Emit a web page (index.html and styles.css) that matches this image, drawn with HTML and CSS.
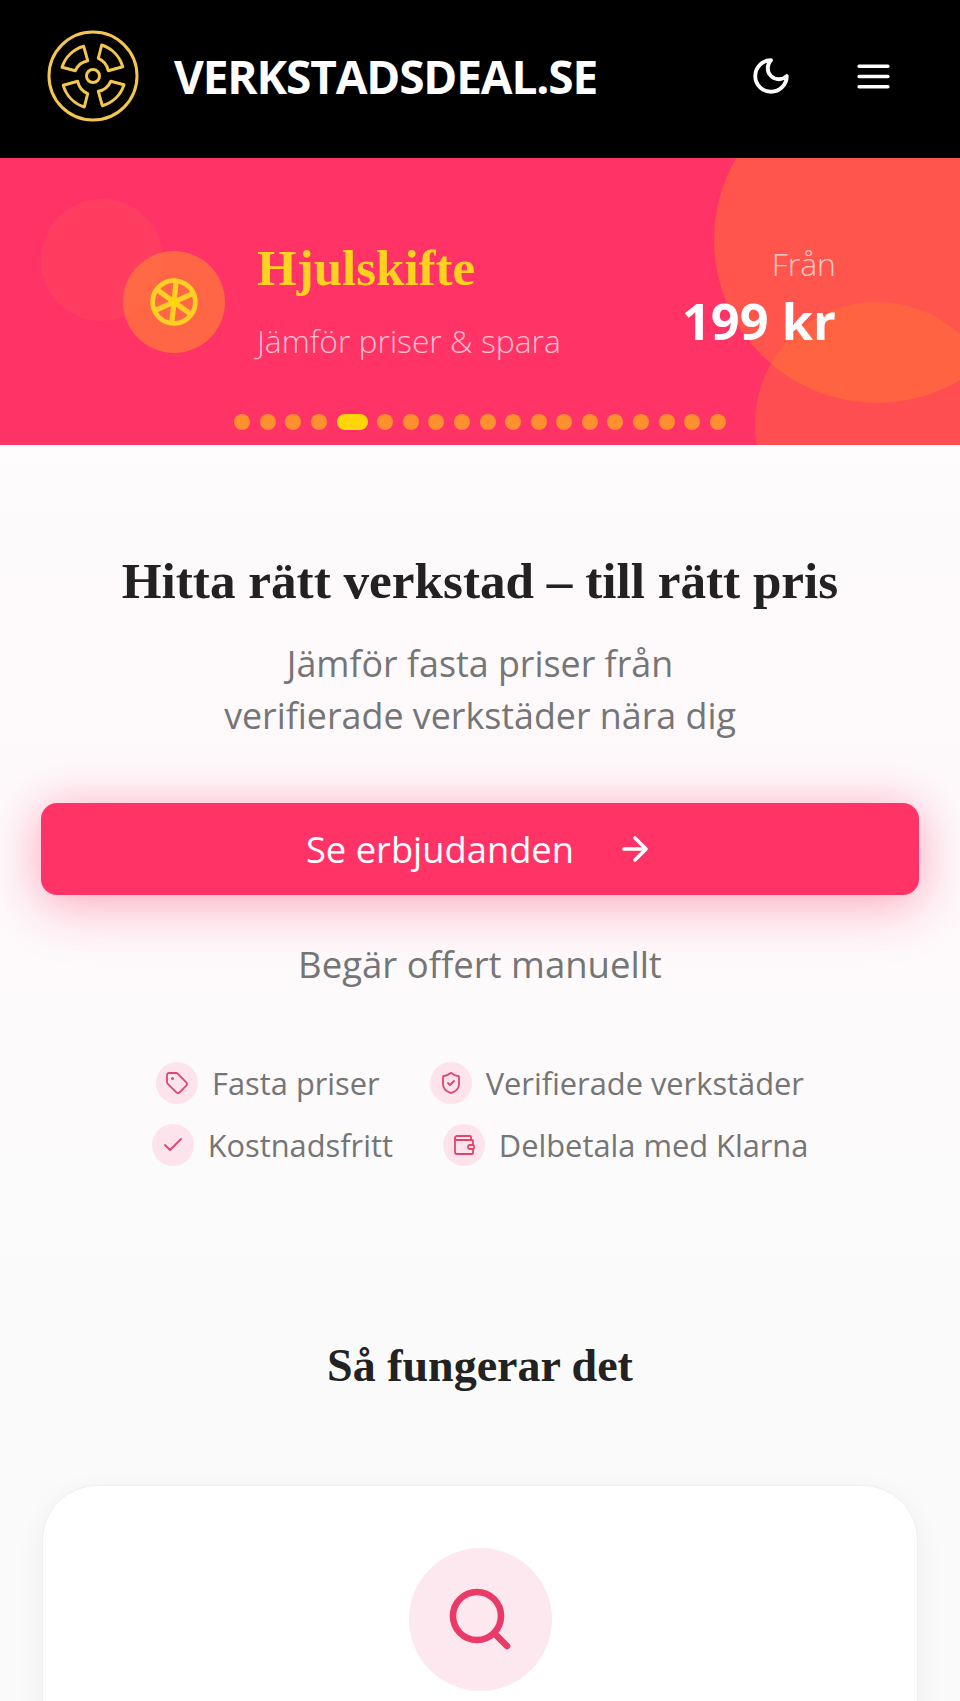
FILE: index.html
```html
<!DOCTYPE html>
<html lang="sv">
<head>
  <meta charset="UTF-8">
  <meta name="viewport" content="width=device-width, initial-scale=1.0">
  <title>Verkstadsdeal.se</title>
  <link rel="stylesheet" href="styles.css">
</head>
<body>
  <header class="topbar">
    <a class="brand" href="#">
      <svg class="brand-logo" viewBox="-46 -46 92 92" fill="none" stroke="#f3c74f" stroke-width="3" stroke-linejoin="round">
        <circle r="44"/>
        <circle r="6.5"/>
        <path id="seg" d="M-31 -8.7A32 32 0 0 1 -9.3 -29.7L-5.3 -15.3A17 17 0 0 0 -17.7 -5.3Z"/>
        <use href="#seg" transform="rotate(90)"/>
        <use href="#seg" transform="rotate(180)"/>
        <use href="#seg" transform="rotate(270)"/>
      </svg>
      <span class="brand-name">VERKSTADSDEAL.SE</span>
    </a>
    <div class="topbar-actions">
      <svg class="moon-icon" viewBox="0 0 24 24" fill="none" stroke="#fff" stroke-width="2.2" stroke-linecap="round" stroke-linejoin="round">
        <path d="M12 3a6 6 0 0 0 9 9 9 9 0 1 1-9-9Z"/>
      </svg>
      <svg class="menu-icon" viewBox="0 0 32 24" fill="none" stroke="#fff" stroke-width="3.3" stroke-linecap="round">
        <path d="M2 2h28M2 12h28M2 22h28"/>
      </svg>
    </div>
  </header>

  <section class="hero">
    <span class="blob blob-left"></span>
    <span class="blob blob-top"></span>
    <span class="blob blob-bottom"></span>

    <div class="hero-icon">
      <svg viewBox="-24 -24 48 48" fill="none" stroke="#ffcf24" stroke-width="4.6" stroke-linecap="round">
        <circle r="20.5"/>
        <path stroke-width="5" d="M0 -19V19M-16.5 -9.5L16.5 9.5M16.5 -9.5L-16.5 9.5"/>
        <circle r="4" fill="#ffd60a" stroke="none"/>
      </svg>
    </div>
    <div class="hero-text">
      <h2>Hjulskifte</h2>
      <p>Jämför priser &amp; spara</p>
    </div>
    <div class="hero-price">
      <span class="price-from">Från</span>
      <span class="price-value">199 kr</span>
    </div>

    <div class="dots">
      <span class="dot"></span>
      <span class="dot"></span>
      <span class="dot"></span>
      <span class="dot"></span>
      <span class="dot active"></span>
      <span class="dot"></span>
      <span class="dot"></span>
      <span class="dot"></span>
      <span class="dot"></span>
      <span class="dot"></span>
      <span class="dot"></span>
      <span class="dot"></span>
      <span class="dot"></span>
      <span class="dot"></span>
      <span class="dot"></span>
      <span class="dot"></span>
      <span class="dot"></span>
      <span class="dot"></span>
      <span class="dot"></span>
    </div>
  </section>

  <main class="content">
    <h1>Hitta rätt verkstad – till rätt pris</h1>
    <p class="lead">Jämför fasta priser från<br>verifierade verkstäder nära dig</p>

    <button class="cta">
      <span>Se erbjudanden</span>
      <svg viewBox="0 0 24 24" fill="none" stroke="#fff" stroke-width="2.2" stroke-linecap="round" stroke-linejoin="round">
        <path d="M5 12h14M12 5l7 7-7 7"/>
      </svg>
    </button>
    <a class="manual-link" href="#">Begär offert manuellt</a>

    <ul class="perks">
      <li class="perk">
        <span class="perk-icon">
          <svg viewBox="0 0 24 24">
            <path d="M12.6 2.6A2 2 0 0 0 11.2 2H4a2 2 0 0 0-2 2v7.2a2 2 0 0 0 .6 1.4l8.7 8.7a2.4 2.4 0 0 0 3.4 0l6.6-6.6a2.4 2.4 0 0 0 0-3.4Z"/>
            <circle cx="7.5" cy="7.5" r=".6"/>
          </svg>
        </span>
        Fasta priser
      </li>
      <li class="perk">
        <span class="perk-icon">
          <svg viewBox="0 0 24 24">
            <path d="M20 13c0 5-3.5 7.500-7.660 8.950a1 1 0 0 1-.67-.01C7.500 20.500 4 18 4 13V6a1 1 0 0 1 1-1c2 0 4.500-1.200 6.240-2.720a1.170 1.170 0 0 1 1.520 0C14.510 3.810 17 5 19 5a1 1 0 0 1 1 1Z"/>
            <path d="m9 12 2 2 4-4"/>
          </svg>
        </span>
        Verifierade verkstäder
      </li>
      <li class="perk">
        <span class="perk-icon">
          <svg viewBox="0 0 24 24">
            <path d="M20 6 9 17l-5-5"/>
          </svg>
        </span>
        Kostnadsfritt
      </li>
      <li class="perk">
        <span class="perk-icon">
          <svg viewBox="0 0 24 24">
            <path d="M19 7V4a1 1 0 0 0-1-1H5a2 2 0 0 0 0 4h15a1 1 0 0 1 1 1v4h-3a2 2 0 0 0 0 4h3a1 1 0 0 0 1-1v-2a1 1 0 0 0-1-1"/>
            <path d="M3 5v14a2 2 0 0 0 2 2h15a1 1 0 0 0 1-1v-4"/>
          </svg>
        </span>
        Delbetala med Klarna
      </li>
    </ul>

    <h2 class="how-title">Så fungerar det</h2>

    <article class="step-card">
      <div class="step-icon">
        <svg viewBox="0 0 24 24" fill="none" stroke="#ea3a68" stroke-width="2.2" stroke-linecap="round" stroke-linejoin="round">
          <circle cx="11" cy="11" r="8"/>
          <path d="m21 21-4.300-4.300"/>
        </svg>
      </div>
    </article>
  </main>
</body>
</html>
```

FILE: styles.css
```css
* {
  box-sizing: border-box;
}
html {
  background-color: #fafafa;
}
body {
  margin: 0;
  height: 1701px;
  overflow: hidden;
  font-family: "Open Sans", Arial, sans-serif;
  background: linear-gradient(#fffcfd 445px, #fdfafc 560px, #fdf9fb 760px, #fdfafc 1000px, #fafafa 1400px);
}

/* topbar */
.topbar {
  display: flex;
  align-items: center;
  justify-content: space-between;
  height: 158px;
  padding: 0 70px 6px 47px;
  background-color: #000;
}
.brand {
  display: flex;
  align-items: center;
  gap: 35px;
  text-decoration: none;
}
.brand-logo {
  display: block;
  width: 92px;
  height: 92px;
}
.brand-name {
  color: #fff;
  font-size: 46px;
  font-weight: 700;
  letter-spacing: -1.15px;
}
.topbar-actions {
  display: flex;
  align-items: center;
  gap: 65px;
}
.moon-icon {
  width: 42px;
  height: 42px;
}
.menu-icon {
  width: 33px;
  height: 25px;
}

/* hero */
.hero {
  position: relative;
  display: flex;
  align-items: center;
  height: 287px;
  padding: 0 124px 0 123px;
  overflow: hidden;
  background-color: #ff3366;
}
.blob {
  position: absolute;
  border-radius: 50%;
}
.blob-left {
  left: 41px;
  top: 41px;
  width: 122px;
  height: 122px;
  background-color: rgba(255, 107, 74, 0.2);
}
.blob-top {
  left: 714px;
  top: -81px;
  width: 326px;
  height: 326px;
  background-color: rgba(255, 120, 50, 0.5);
}
.blob-bottom {
  left: 755px;
  top: 144px;
  width: 244px;
  height: 244px;
  background-color: rgba(255, 120, 50, 0.4);
}
.hero-icon {
  position: relative;
  display: flex;
  align-items: center;
  justify-content: center;
  flex-shrink: 0;
  width: 102px;
  height: 102px;
  margin-right: 32px;
  border-radius: 50%;
  background-color: rgba(255, 120, 60, 0.75);
}
.hero-icon svg {
  width: 50px;
  height: 50px;
  transform: rotate(6deg);
}
.hero-text {
  position: relative;
  flex: 1;
  padding-bottom: 4.5px;
}
.hero-text h2 {
  margin: 0 0 22.5px;
  color: #ffd21f;
  font-family: "Liberation Serif", "Times New Roman", serif;
  font-size: 51px;
  font-weight: 700;
  line-height: 60px;
}
.hero-text p {
  margin: 0;
  color: rgba(255, 255, 255, 0.7);
  font-size: 31.8px;
  font-weight: 300;
  line-height: 40px;
}
.hero-price {
  position: relative;
  display: flex;
  flex-direction: column;
  align-items: flex-end;
  padding-bottom: 4px;
  color: #fff;
}
.price-from {
  color: rgba(255, 255, 255, 0.7);
  font-size: 32px;
  font-weight: 300;
  line-height: 40px;
}
.price-value {
  margin-top: 2px;
  font-size: 50.5px;
  font-weight: 700;
  line-height: 70px;
}
.dots {
  position: absolute;
  left: 0;
  right: 0;
  bottom: 15px;
  display: flex;
  justify-content: center;
  gap: 9.6px;
}
.dot {
  width: 16px;
  height: 16px;
  border-radius: 8px;
  background-color: #ff9030;
}
.dot.active {
  width: 31px;
  background-color: #ffd60a;
}

/* main content */
.content {
  display: flex;
  flex-direction: column;
  align-items: center;
  padding: 0 41px;
  text-align: center;
}
.content h1 {
  margin: 104px 0 0;
  color: #222;
  font-family: "Liberation Serif", "Times New Roman", serif;
  font-size: 51.2px;
  font-weight: 700;
  line-height: 64px;
}
.lead {
  margin: 24px 0 0;
  color: #757575;
  font-size: 35.8px;
  line-height: 52px;
}
.cta {
  display: flex;
  align-items: center;
  justify-content: center;
  gap: 42px;
  width: 100%;
  height: 92px;
  margin-top: 61.5px;
  padding: 0;
  border: none;
  border-radius: 16px;
  color: #fff;
  font-family: inherit;
  font-size: 36.3px;
  background-color: #ff3366;
  box-shadow: 0 4px 48px rgba(255, 51, 102, 0.35), 0 20px 60px rgba(255, 51, 102, 0.12);
}
.cta svg {
  width: 38px;
  height: 38px;
}
.manual-link {
  margin-top: 44px;
  color: #757575;
  font-size: 36.5px;
  font-weight: 500;
  line-height: 50px;
  text-decoration: none;
}
.perks {
  display: flex;
  flex-wrap: wrap;
  justify-content: center;
  gap: 20px 50px;
  margin: 73px 0 0;
  padding: 0;
  list-style: none;
}
.perk {
  display: flex;
  align-items: center;
  gap: 14px;
  height: 42px;
  color: #757575;
  font-size: 30.8px;
}
.perk-icon {
  display: flex;
  align-items: center;
  justify-content: center;
  width: 42px;
  height: 42px;
  border-radius: 50%;
  background-color: #fde4ec;
}
.perk-icon svg {
  width: 24px;
  height: 24px;
  fill: none;
  stroke: #e0446f;
  stroke-width: 1.8;
  stroke-linecap: round;
  stroke-linejoin: round;
}
.how-title {
  margin: 172px 0 0;
  color: #222;
  font-family: "Liberation Serif", "Times New Roman", serif;
  font-size: 46px;
  font-weight: 700;
  line-height: 56px;
}
.step-card {
  display: flex;
  justify-content: center;
  width: calc(100% - 2px);
  height: 320px;
  margin-top: 91px;
  padding-top: 62px;
  border: 1px solid #efefef;
  border-radius: 55px;
  background-color: #fff;
  box-shadow: 0 8px 30px rgba(0, 0, 0, 0.05);
}
.step-icon {
  display: flex;
  align-items: center;
  justify-content: center;
  width: 143px;
  height: 143px;
  border-radius: 50%;
  background-color: #fde8ef;
}
.step-icon svg {
  width: 72px;
  height: 72px;
}
```
